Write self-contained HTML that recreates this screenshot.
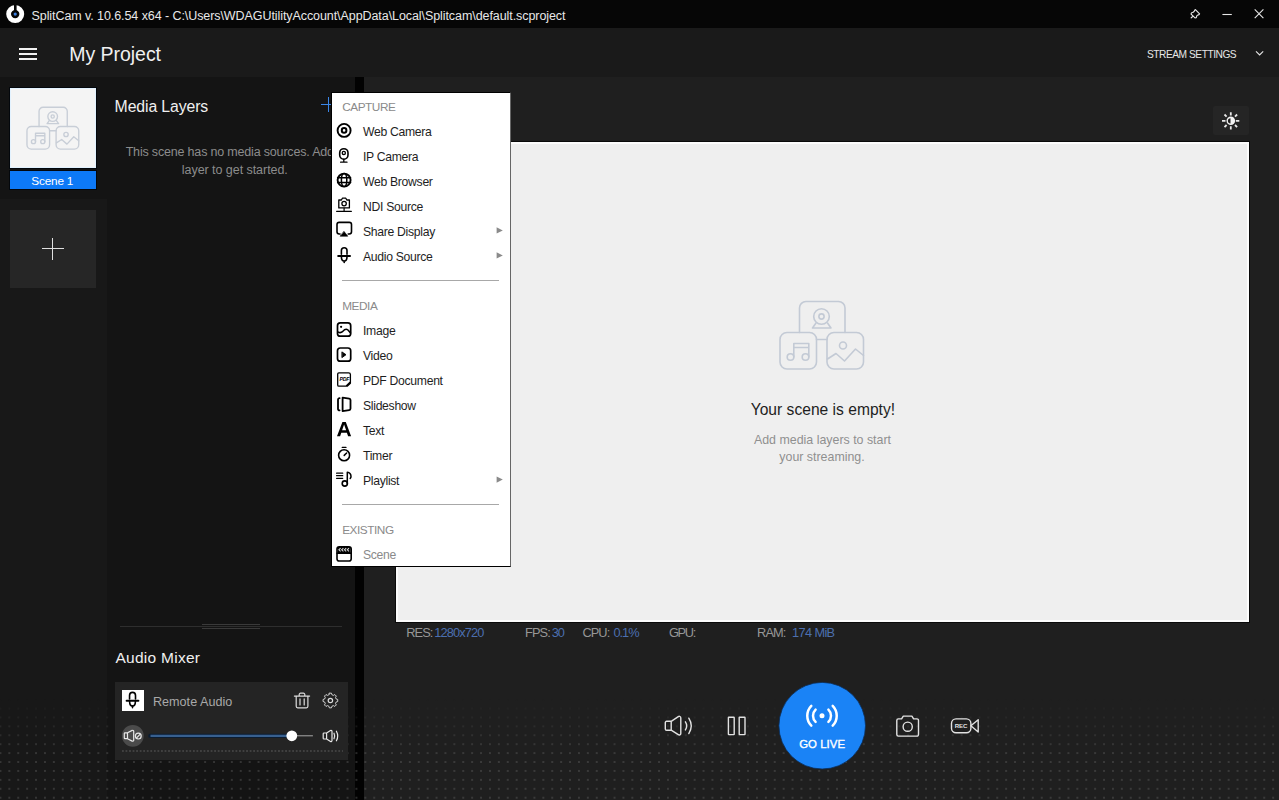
<!DOCTYPE html>
<html><head><meta charset="utf-8"><style>
*{margin:0;padding:0;box-sizing:border-box}
html,body{width:1279px;height:800px;overflow:hidden;background:#1e1e1e;font-family:"Liberation Sans",sans-serif}
.t{position:absolute;line-height:1;white-space:pre}
.a{position:absolute}
svg{position:absolute;overflow:visible}

</style></head><body>
<div class="a" style="left:0px;top:0px;width:1279px;height:28px;background:#060606;"></div>
<div class="a" style="left:0px;top:28px;width:1279px;height:49px;background:#1a1a1a;"></div>
<div class="a" style="left:0px;top:77px;width:107px;height:723px;background:#181818;"></div>
<div class="a" style="left:0px;top:77px;width:107px;height:122px;background:#141414;"></div>
<div class="a" style="left:107px;top:77px;width:248px;height:723px;background:#141414;"></div>
<div class="a" style="left:355px;top:77px;width:9px;height:723px;background:#020202;"></div>
<div class="a" style="left:364px;top:77px;width:915px;height:723px;background:#1f1f1f;"></div>
<svg style="left:0;top:0" width="1279" height="800">
<defs>
<pattern id="dp" x="0.45" y="3.82" width="8.9" height="8.92" patternUnits="userSpaceOnUse">
<circle cx="0" cy="0" r="0.72" fill="#646464"/><circle cx="8.9" cy="0" r="0.72" fill="#646464"/><circle cx="0" cy="8.92" r="0.72" fill="#646464"/><circle cx="8.9" cy="8.92" r="0.72" fill="#646464"/>
</pattern>
<linearGradient id="dg" x1="0" y1="0" x2="0" y2="1"><stop offset="0" stop-color="#fff" stop-opacity="0"/><stop offset="0.55" stop-color="#fff" stop-opacity="1"/></linearGradient>
<mask id="dm"><rect x="0" y="699" width="1279" height="101" fill="url(#dg)"/></mask>
</defs>
<rect x="0" y="699" width="1279" height="101" fill="url(#dp)" mask="url(#dm)"/>
</svg><svg style="left:0;top:0" width="40" height="28">
<circle cx="15.2" cy="14.1" r="6.6" fill="none" stroke="#fff" stroke-width="4.8"/>
<rect x="14" y="3" width="2.6" height="8" fill="#060606"/>
<circle cx="15.2" cy="14.1" r="1.6" fill="#3a7ee0"/>
</svg><div class="t" style="left:31.5px;top:9.62px;font-size:12.5px;color:#e8e8e8;letter-spacing:-0.075px;">SplitCam v. 10.6.54 x64 - C:\Users\WDAGUtilityAccount\AppData\Local\Splitcam\default.scproject</div>
<svg style="left:1185px;top:5px" width="90" height="20">
<path d="M10.4 4.6 L14.6 8.8 Q14.2 9.9 12.4 10.3 Q11.5 10.9 11.5 12.1 Q11.4 12.9 10 12.9 L6.1 9.2 Q6 8.1 6.8 7.7 Q8.4 7.6 9.2 6.4 Q9.6 4.9 10.4 4.6 Z M8 11.3 L6.2 12.8" fill="none" stroke="#e6e6e6" stroke-width="1.15" stroke-linejoin="round" stroke-linecap="round"/>
<path d="M37.4 9.5 H46.8" stroke="#e6e6e6" stroke-width="1.1"/>
<path d="M69.7 4.4 L78.4 13.1 M78.4 4.4 L69.7 13.1" stroke="#e6e6e6" stroke-width="1.1"/>
</svg><div class="a" style="left:19px;top:47.5px;width:18px;height:2px;background:#f2f2f2;"></div>
<div class="a" style="left:19px;top:52.5px;width:18px;height:2px;background:#f2f2f2;"></div>
<div class="a" style="left:19px;top:57.5px;width:18px;height:2px;background:#f2f2f2;"></div>
<div class="t" style="left:69.2px;top:45.19px;font-size:19.5px;color:#f0f0f0;letter-spacing:-0.03px;">My Project</div>
<div class="t" style="left:1147px;top:49.87px;font-size:10.2px;color:#e6e6e6;letter-spacing:-0.47px;">STREAM SETTINGS</div>
<svg style="left:1250px;top:45px" width="20" height="16">
<path d="M6 6.3 L9.6 10 L13.2 6.3" fill="none" stroke="#e6e6e6" stroke-width="1.1"/>
</svg><div class="a" style="left:10px;top:88px;width:86px;height:80px;background:#f4f4f4;border:1px solid #e2f2ff;box-shadow:0 0 0 1px #03070c;"></div>
<svg style="left:22.2px;top:102.8px" width="62" height="50" viewBox="0 0 100 80"><g fill="none" stroke="#c8ced7" stroke-width="2.2" stroke-linecap="round" stroke-linejoin="round">
<path d="M27.5 37.5 V13 a6.5 6.5 0 0 1 6.5 -6.5 H66.5 a6.5 6.5 0 0 1 6.5 6.5 V37.5"/>
<rect x="8" y="37.5" width="36.5" height="36.5" rx="7"/>
<rect x="55" y="37.5" width="36.5" height="36.5" rx="7"/>
<path d="M44.5 44.5 H55"/>
<circle cx="49.5" cy="21.5" r="7.8"/><circle cx="49.5" cy="21.5" r="2.6"/>
<path d="M44 28 L40.5 33 H59 L55.5 28"/>
<circle cx="18.5" cy="62" r="3.3"/><circle cx="33.5" cy="62" r="3.3"/>
<path d="M21.8 62 V48.5 H36.8 V62 M21.8 52.5 H36.8"/>
<circle cx="71" cy="50.5" r="3.5"/>
<path d="M55.5 64 L64 58.5 L72.5 66 L83.5 54 L91.5 60.5"/>
</g></svg><div class="a" style="left:10px;top:171px;width:86px;height:18px;background:#0d79f7;box-shadow:0 0 0 1px #03070c;"></div>
<div class="t" style="left:31.3px;top:175.61px;font-size:11.8px;color:#ffffff;letter-spacing:-0.2px;">Scene 1</div>
<div class="a" style="left:10px;top:210px;width:86px;height:78px;background:#262626;"></div>
<div class="a" style="left:41.5px;top:248px;width:22px;height:1.4px;background:#e0e0e0;"></div>
<div class="a" style="left:52px;top:237.5px;width:1.4px;height:22px;background:#e0e0e0;"></div>
<div class="t" style="left:114.6px;top:99.33px;font-size:15.8px;color:#f0f0f0;letter-spacing:-0.11px;">Media Layers</div>
<div class="t" style="left:-65.19999999999999px;width:600px;text-align:center;top:146.12px;font-size:12.5px;color:#8c8c8c;letter-spacing:-0.18px;">This scene has no media sources. Add a</div>
<div class="t" style="left:-65.19999999999999px;width:600px;text-align:center;top:164.12px;font-size:12.5px;color:#8c8c8c;letter-spacing:-0.05px;">layer to get started.</div>
<div class="a" style="left:321px;top:103.8px;width:14px;height:1.3px;background:#3a86e8;"></div>
<div class="a" style="left:327.7px;top:97.2px;width:1.3px;height:14.4px;background:#3a86e8;"></div>
<div class="a" style="left:120px;top:626px;width:222px;height:1px;background:#2e2e2e;"></div>
<div class="a" style="left:202px;top:624px;width:58px;height:1px;background:#3a3a3a;"></div>
<div class="a" style="left:202px;top:628px;width:58px;height:1px;background:#3a3a3a;"></div>
<div class="t" style="left:115.4px;top:649.88px;font-size:15.5px;color:#f0f0f0;letter-spacing:0.28px;">Audio Mixer</div>
<div class="a" style="left:1213px;top:106px;width:36px;height:29px;background:#252525;border-radius:2px;"></div>
<svg style="left:0;top:0" width="1279" height="800">
<g stroke="#e8e8e8" stroke-width="1.8" stroke-linecap="butt">
<path d="M1230.8 112.2 V115.6 M1230.8 126.2 V129.4 M1222 120.8 H1225.5 M1235.8 120.8 H1239.3"/>
<path d="M1224.5 114.5 L1226.6 116.6 M1235 125 L1237.1 127.1 M1237.1 114.5 L1235 116.6 M1226.6 125 L1224.5 127.1"/>
</g>
<circle cx="1230.8" cy="120.8" r="4.3" fill="#f4f4f4"/>
<path d="M1230.5 118.2 a2.6 2.6 0 0 0 0 5.2 Z" fill="#1f1f1f"/>
</svg><div class="a" style="left:395px;top:141px;width:855px;height:482px;background:#0a0a0a;"></div>
<div class="a" style="left:396px;top:142px;width:853px;height:480px;background:#efefef;border:2px solid #fcfcfc;"></div>
<svg style="left:772px;top:295px" width="100" height="80" viewBox="0 0 100 80"><g fill="none" stroke="#c3cad5" stroke-width="1.6" stroke-linecap="round" stroke-linejoin="round">
<path d="M27.5 37.5 V13 a6.5 6.5 0 0 1 6.5 -6.5 H66.5 a6.5 6.5 0 0 1 6.5 6.5 V37.5"/>
<rect x="8" y="37.5" width="36.5" height="36.5" rx="7"/>
<rect x="55" y="37.5" width="36.5" height="36.5" rx="7"/>
<path d="M44.5 44.5 H55"/>
<circle cx="49.5" cy="21.5" r="7.8"/><circle cx="49.5" cy="21.5" r="2.6"/>
<path d="M44 28 L40.5 33 H59 L55.5 28"/>
<circle cx="18.5" cy="62" r="3.3"/><circle cx="33.5" cy="62" r="3.3"/>
<path d="M21.8 62 V48.5 H36.8 V62 M21.8 52.5 H36.8"/>
<circle cx="71" cy="50.5" r="3.5"/>
<path d="M55.5 64 L64 58.5 L72.5 66 L83.5 54 L91.5 60.5"/>
</g></svg><div class="t" style="left:522.9px;width:600px;text-align:center;top:402.49px;font-size:15.6px;color:#1e1e1e;letter-spacing:0.01px;">Your scene is empty!</div>
<div class="t" style="left:522.5px;width:600px;text-align:center;top:434.00px;font-size:12.4px;color:#8f8f8f;">Add media layers to start</div>
<div class="t" style="left:522px;width:600px;text-align:center;top:450.70px;font-size:12.4px;color:#8f8f8f;">your streaming.</div>
<div class="t" style="left:406.2px;top:627.16px;font-size:12.8px;color:#979797;letter-spacing:-0.9px;">RES:</div>
<div class="t" style="left:434.2px;top:627.16px;font-size:12.8px;color:#4c6fb0;letter-spacing:-0.85px;">1280x720</div>
<div class="t" style="left:525px;top:627.16px;font-size:12.8px;color:#979797;letter-spacing:-0.9px;">FPS:</div>
<div class="t" style="left:551.8px;top:627.16px;font-size:12.8px;color:#4c6fb0;letter-spacing:-1.2px;">30</div>
<div class="t" style="left:582.4px;top:627.16px;font-size:12.8px;color:#979797;letter-spacing:-0.9px;">CPU:</div>
<div class="t" style="left:613.4px;top:627.16px;font-size:12.8px;color:#4c6fb0;letter-spacing:-1.0px;">0.1%</div>
<div class="t" style="left:668.9px;top:627.16px;font-size:12.8px;color:#979797;letter-spacing:-1.3px;">GPU:</div>
<div class="t" style="left:757.1px;top:627.16px;font-size:12.8px;color:#979797;letter-spacing:-0.9px;">RAM:</div>
<div class="t" style="left:792.1px;top:627.16px;font-size:12.8px;color:#4c6fb0;letter-spacing:-0.65px;">174 MiB</div>
<svg style="left:0;top:0" width="1279" height="800">
<g fill="none" stroke="#e2e2e2" stroke-width="1.4" stroke-linejoin="round" stroke-linecap="round">
<path d="M666.6 721.3 H671.2 L678.3 716.6 a1.6 1.6 0 0 1 2.5 1.3 V733.4 a1.6 1.6 0 0 1 -2.5 1.3 L671.2 730.2 H666.6 a1.3 1.3 0 0 1 -1.3 -1.3 V722.6 a1.3 1.3 0 0 1 1.3 -1.3 Z M671.2 721.3 V730.2"/>
<path d="M685.4 721.8 Q688 725.8 685.4 729.9 M688.8 718.2 Q693.7 725.8 688.8 733.6"/>
<rect x="728.4" y="717.2" width="5.8" height="17.4" rx="0.4"/>
<rect x="739.2" y="717.2" width="5.8" height="17.4" rx="0.4"/>
<path d="M898.3 718.9 H901.6 L903.3 716.1 H911.9 L913.6 718.9 H917 a1.5 1.5 0 0 1 1.5 1.5 V734.6 a1.5 1.5 0 0 1 -1.5 1.5 H898.3 a1.5 1.5 0 0 1 -1.5 -1.5 V720.4 a1.5 1.5 0 0 1 1.5 -1.5 Z"/>
<circle cx="907.7" cy="726.7" r="4.6"/>
<rect x="951.5" y="718.9" width="19.4" height="13.8" rx="4.5"/>
<path d="M970.9 725.8 L978.2 719.7 V732 Z"/>
</g>
<text x="961.1" y="728.3" text-anchor="middle" font-family="Liberation Sans" font-size="6.1" font-weight="700" fill="#e2e2e2" letter-spacing="-0.1">REC</text>
<circle cx="822.2" cy="725.7" r="43.3" fill="#1a83f6" stroke="#0b2f5a" stroke-width="0.8"/>
<circle cx="822" cy="715.8" r="2.5" fill="#fff"/>
<g fill="none" stroke="#fff" stroke-width="2.5" stroke-linecap="round">
<path d="M815.6 709.6 a8.6 8.6 0 0 0 0 12.3 M828.4 709.6 a8.6 8.6 0 0 1 0 12.3"/>
<path d="M811.3 705.8 a14.3 14.3 0 0 0 0 19.9 M832.7 705.8 a14.3 14.3 0 0 1 0 19.9"/>
</g>
</svg><div class="t" style="left:522.1px;width:600px;text-align:center;top:739.35px;font-size:11.4px;color:#ffffff;letter-spacing:0.05px;-webkit-text-stroke:0.35px #fff;">GO LIVE</div>
<div class="a" style="left:115px;top:682px;width:233px;height:78px;background:#242424;"></div>
<div class="a" style="left:122px;top:689.5px;width:22px;height:21.5px;background:#ffffff;"></div>
<div class="t" style="left:152.9px;top:696.03px;font-size:12.6px;color:#a9a9a9;letter-spacing:0.03px;">Remote Audio</div>
<svg style="left:0;top:0" width="1279" height="800">
<g fill="none" stroke="#000" stroke-width="1.5" stroke-linecap="round">
<path d="M129.55 698.9 V695.4 a2.98 2.98 0 0 1 5.96 0 V698.9" stroke-width="1.6"/>
<path d="M126.6 700.7 H138.4" stroke-width="2"/>
<path d="M129.6 701.4 C129.6 704.5 131 705.9 132.5 706.1 C134 705.9 135.4 704.5 135.4 701.4" stroke-width="1.6"/>
<path d="M132.5 706 L132.5 707.7" stroke-width="1.5"/>
</g>
<g fill="none" stroke="#dcdcdc" stroke-width="1.2" stroke-linecap="round" stroke-linejoin="round">
<path d="M294.4 696.1 H309.6 M299.2 695.9 V694.6 a1.4 1.4 0 0 1 1.4 -1.4 H303.4 a1.4 1.4 0 0 1 1.4 1.4 V695.9"/>
<path d="M296.2 696.3 V706.3 a1.5 1.5 0 0 0 1.5 1.5 H306.4 a1.5 1.5 0 0 0 1.5 -1.5 V696.3"/>
<path d="M300 698.9 V704.9 M304.2 698.9 V704.9"/>
<circle cx="330.4" cy="700.5" r="2.2"/>
<path d="M329.1 692.6 H331.7 L332.3 694.6 L334.2 695.4 L336 694.4 L337.9 696.3 L336.9 698.1 L337.7 700 L339.7 700.6 L339.7 703.2 L337.7 703.8 L336.9 705.7 L337.9 707.5 L336 709.4 L334.2 708.4 L332.3 709.2 L331.7 711.2 H329.1 L328.5 709.2 L326.6 708.4 L324.8 709.4 L322.9 707.5 L323.9 705.7 L323.1 703.8 L321.1 703.2 V700.6 L323.1 700 L323.9 698.1 L322.9 696.3 L324.8 694.4 L326.6 695.4 L328.5 694.6 Z" transform="translate(330.4 700.5) scale(0.79) translate(-330.4 -701.9)"/>
</g>
<circle cx="132.8" cy="735.8" r="10.9" fill="#4b4b4b"/>
<g fill="none" stroke="#e8e8e8" stroke-width="1.2" stroke-linejoin="round" stroke-linecap="round">
<path d="M125 732.8 H127.5 L132.2 730.4 a1 1 0 0 1 1.5 0.9 V740.2 a1 1 0 0 1 -1.5 0.9 L127.5 738.7 H125 a0.7 0.7 0 0 1 -0.7 -0.7 V733.5 a0.7 0.7 0 0 1 0.7 -0.7 Z M127.5 732.8 V738.7"/>
<circle cx="138.3" cy="736.1" r="2.9"/>
<path d="M136.6 737.8 L140 734.4"/>
<path d="M324 733 H326.6 L330.5 730.6 a1 1 0 0 1 1.5 0.9 V740.5 a1 1 0 0 1 -1.5 0.9 L326.6 739 H324 a0.8 0.8 0 0 1 -0.8 -0.8 V733.8 a0.8 0.8 0 0 1 0.8 -0.8 Z M326.6 733 V739"/>
<path d="M334 733.2 Q335.3 736 334 738.8 M336.4 731.2 Q339 736 336.4 740.8"/>
</g>
<path d="M297 735.8 H312.9" stroke="#a8a8a8" stroke-width="1"/>
<path d="M150.3 735.9 H291" stroke="#0b1d33" stroke-width="4.2" stroke-linecap="round"/>
<path d="M150.5 735.9 H291" stroke="#38608f" stroke-width="2.4"/>
<circle cx="291.8" cy="735.8" r="5.4" fill="#ffffff"/>
</svg><div class="a" style="left:121.5px;top:750px;width:221px;height:2px;background-image:linear-gradient(to right, #404040 2px, transparent 2px);background-size:3.55px 2px"></div>
<div class="a" style="left:331px;top:92px;width:180px;height:475px;background:#ffffff;border:1px solid #000;border-right-color:rgba(0,0,0,0.6);"></div>
<div class="t" style="left:342.2px;top:101.71px;font-size:11.8px;color:#8a8a8a;letter-spacing:-0.45px;">CAPTURE</div>
<div class="t" style="left:363px;top:126.07px;font-size:12.2px;color:#1e1e1e;letter-spacing:-0.3px;">Web Camera</div>
<div class="t" style="left:363px;top:151.07px;font-size:12.2px;color:#1e1e1e;letter-spacing:-0.3px;">IP Camera</div>
<div class="t" style="left:363px;top:176.07px;font-size:12.2px;color:#1e1e1e;letter-spacing:-0.3px;">Web Browser</div>
<div class="t" style="left:363px;top:201.07px;font-size:12.2px;color:#1e1e1e;letter-spacing:-0.3px;">NDI Source</div>
<div class="t" style="left:363px;top:226.07px;font-size:12.2px;color:#1e1e1e;letter-spacing:-0.3px;">Share Display</div>
<div class="t" style="left:363px;top:251.07px;font-size:12.2px;color:#1e1e1e;letter-spacing:-0.3px;">Audio Source</div>
<div class="a" style="left:342px;top:280px;width:157px;height:1px;background:#a8a8a8;"></div>
<div class="t" style="left:342.2px;top:300.91px;font-size:11.8px;color:#8a8a8a;letter-spacing:-0.45px;">MEDIA</div>
<div class="t" style="left:363px;top:325.17px;font-size:12.2px;color:#1e1e1e;letter-spacing:-0.3px;">Image</div>
<div class="t" style="left:363px;top:350.17px;font-size:12.2px;color:#1e1e1e;letter-spacing:-0.3px;">Video</div>
<div class="t" style="left:363px;top:375.17px;font-size:12.2px;color:#1e1e1e;letter-spacing:-0.3px;">PDF Document</div>
<div class="t" style="left:363px;top:400.17px;font-size:12.2px;color:#1e1e1e;letter-spacing:-0.3px;">Slideshow</div>
<div class="t" style="left:363px;top:425.17px;font-size:12.2px;color:#1e1e1e;letter-spacing:-0.3px;">Text</div>
<div class="t" style="left:363px;top:450.17px;font-size:12.2px;color:#1e1e1e;letter-spacing:-0.3px;">Timer</div>
<div class="t" style="left:363px;top:475.17px;font-size:12.2px;color:#1e1e1e;letter-spacing:-0.3px;">Playlist</div>
<div class="a" style="left:342px;top:504px;width:157px;height:1px;background:#a8a8a8;"></div>
<div class="t" style="left:342.2px;top:525.11px;font-size:11.8px;color:#8a8a8a;letter-spacing:-0.45px;">EXISTING</div>
<div class="t" style="left:363px;top:549.17px;font-size:12.2px;color:#8a8a8a;letter-spacing:-0.3px;">Scene</div>
<svg style="left:0;top:0" width="1279" height="800"><g fill="#8a8a8a"><path d="M496.6 227.20000000000002 L502.8 230.4 L496.6 233.6 Z"/><path d="M496.6 252.20000000000002 L502.8 255.4 L496.6 258.6 Z"/><path d="M496.6 476.40000000000003 L502.8 479.6 L496.6 482.8 Z"/></g></svg><svg style="left:0;top:0" width="1279" height="800">
<g fill="none" stroke="#000" stroke-width="1.6" stroke-linecap="round" stroke-linejoin="round">
<circle cx="344.1" cy="130.4" r="6.5" stroke-width="1.9"/><circle cx="344.1" cy="130.4" r="2.3" stroke-width="2"/>
<rect x="339.7" y="148.7" width="8.3" height="10.5" rx="4.15" stroke-width="1.6"/>
<circle cx="343.8" cy="152.9" r="1.6" stroke-width="1.3"/>
<path d="M343.8 159.2 V162 M340.6 162.2 H347" stroke-width="1.3"/>
<circle cx="344.1" cy="180.1" r="6.5" stroke-width="1.9"/>
<ellipse cx="344.1" cy="180.1" rx="2.7" ry="6.5" stroke-width="1.5"/>
<path d="M337.6 177.8 H350.6 M337.6 182.6 H350.6" stroke-width="1.5"/>
<path d="M338.8 200 H341.4 L342.4 198.2 H345.8 L346.8 200 H349.4 V207.9 H338.8 Z" stroke-width="1.3"/>
<circle cx="344.1" cy="203.6" r="2.2" stroke-width="1.3"/>
<path d="M336.6 211.3 H351.4 M344.1 208 V211.3" stroke-width="1.2"/>
<path d="M340 234 H339.2 a2.2 2.2 0 0 1 -2.2 -2.2 V224.6 a2.2 2.2 0 0 1 2.2 -2.2 H349.3 a2.2 2.2 0 0 1 2.2 2.2 V231.8 a2.2 2.2 0 0 1 -2.2 2.2 H348.2"/>
<path d="M344.1 231.6 L347.8 236.2 H340.4 Z" fill="#000" stroke-width="0.6"/>
<path d="M341.4 254.3 V250.6 a2.8 2.8 0 0 1 5.6 0 V254.3"/>
<path d="M338.2 255.9 H350" stroke-width="2"/>
<path d="M341.4 256.7 C341.4 259.7 342.7 261 344.2 261.2 C345.7 261 347 259.7 347 256.7 M344.2 261 V262.4"/>
<rect x="337.5" y="322.9" width="13.2" height="13.3" rx="2.8" stroke-width="1.7"/>
<circle cx="341.1" cy="326.8" r="1.1" fill="#000" stroke="none"/>
<path d="M337.8 331.9 Q340.5 333.6 342.8 331.4 Q345.5 328.1 348 330 L350.5 333" stroke-width="1.5"/>
<rect x="337.5" y="348" width="13.2" height="13.2" rx="2.8" stroke-width="1.7"/>
<path d="M342.2 352.1 L346 354.7 L342.2 357.4 Z" fill="#000" stroke-width="0.9"/>
<path d="M338.9 372.8 H348.6 a1.8 1.8 0 0 1 1.8 1.8 V383.2 L347.2 386.2 H338.9 a1.2 1.2 0 0 1 -1.2 -1.2 V374 a1.2 1.2 0 0 1 1.2 -1.2 Z M346.4 385.8 L350 382.3" stroke-width="1.3"/>
<path d="M339.6 398.2 a1.5 1.5 0 0 0 -1.6 1.5 V408.9 a1.5 1.5 0 0 0 1.6 1.5" stroke-width="1.8"/>
<path d="M342.6 397.6 L349.2 398.6 a1.5 1.5 0 0 1 1.3 1.5 V408.6 a1.5 1.5 0 0 1 -1.3 1.5 L342.6 411.1 Z" stroke-width="1.8"/>
<path d="M342.3 447.4 H345.9" stroke-width="1.4"/>
<circle cx="344.1" cy="455.3" r="5.5" stroke-width="1.6"/>
<path d="M344.2 455.4 L346.6 453" stroke-width="1.5"/>
<path d="M336.6 473.2 H342.7 M336.6 475.7 H342.7 M336.6 478.3 H342.7" stroke-width="1.3"/>
<circle cx="344.8" cy="483.5" r="2.6" stroke-width="1.6"/>
<path d="M347.3 483.4 V472.2 Q350.8 472.6 351 476.2 Q351.1 477.4 350.2 478.4" stroke-width="1.5"/>
<rect x="337" y="546.8" width="14.2" height="14.2" rx="2.3" stroke-width="1.6"/>
<path d="M337 553.2 H351.2" stroke-width="1.4"/>
</g>
<g fill="#000" stroke="none">
<path d="M342.4 422 H345.8 L351.1 436.3 H348.1 L346.9 432.7 H341.3 L340.1 436.3 H337 Z M342.1 430.3 H346.1 L344.1 424.6 Z" fill-rule="evenodd"/>
<text x="339.6" y="381.4" font-family="Liberation Sans" font-size="5.2" font-weight="700" font-style="italic" letter-spacing="-0.3">PDF</text>
<path d="M337.6 547 H350.6 V553 H337.6 Z"/><path d="M340.6 548.2 L338.9 549.8 L340.6 551.4 M343.4 548.2 L341.7 549.8 L343.4 551.4 M346.2 548.2 L344.5 549.8 L346.2 551.4 M349 548.2 L347.3 549.8 L349 551.4" stroke="#d8d8d8" stroke-width="1.1" fill="none"/>
</g>
</svg>
</body></html>
